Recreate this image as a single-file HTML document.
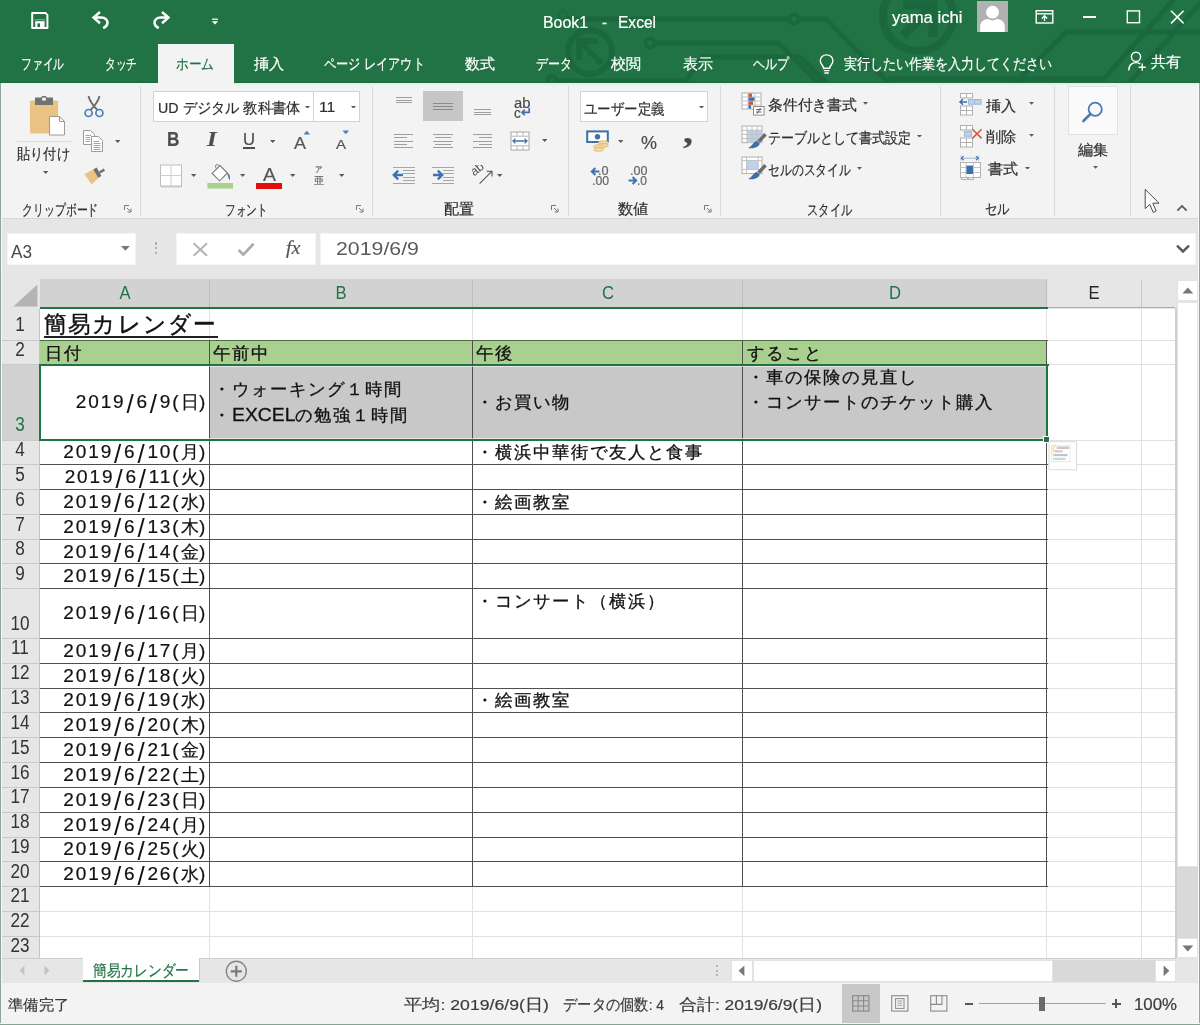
<!DOCTYPE html>
<html lang="ja"><head><meta charset="utf-8"><title>Book1 - Excel</title><style>
html,body{margin:0;padding:0}
body{width:1200px;height:1025px;position:relative;overflow:hidden;background:#e6e6e6;font-family:"Liberation Sans",sans-serif}
body div,body span,body svg{position:absolute;display:block}
.t{white-space:nowrap;transform-origin:0 50%;-webkit-text-stroke:.2px}
.c{white-space:nowrap;text-align:center}
.d{font-size:19px;line-height:19px;color:#111;letter-spacing:1.9px;-webkit-text-stroke:.2px #111}
.d i{font-style:normal;font-size:26px;line-height:0;position:relative;top:4.4px;padding:0 .9px;-webkit-text-stroke:0}
.d b{font-weight:normal;font-size:18px;letter-spacing:.3px}
.t i.e{font-style:normal;letter-spacing:0;font-size:19px}
</style></head><body>
<div style="left:0;top:0;width:1200px;height:1025px;will-change:transform">
<div style="left:0px;top:0px;width:1200px;height:83px;background:#217346;"></div>
<svg style="left:0px;top:0px;" width="1200" height="83" viewBox="0 0 1200 83"><g fill="none" stroke="#1c683e" stroke-width="5" stroke-linecap="butt" stroke-linejoin="round">
<circle cx="563" cy="15" r="4" stroke-width="3" opacity=".6"/>
<path d="M567 19H789"/><circle cx="794" cy="19" r="4.5" stroke-width="4"/><path d="M799 19H826L890 84"/>
<circle cx="590" cy="52" r="22" stroke-width="6"/>
<path d="M598 41H579V60M579 41L602 64" stroke-width="6" stroke-linejoin="miter"/>
<circle cx="650" cy="43" r="4.5" stroke-width="4"/><path d="M655 43H778L820 84"/>
<circle cx="552" cy="80" r="4" stroke-width="4"/><path d="M556 81H686L702 57H800L828 84"/>
<circle cx="918" cy="16" r="35" stroke-width="8"/>
<path d="M903 5H933V37M931 7L903 36" stroke-width="9" stroke-linejoin="miter"/>
<path d="M1200 32H1066L1014 84"/>
<path d="M1174 -1L1104 79H888"/>
<path d="M1203 0L1128 84"/>
</g></svg>
<svg style="left:30px;top:11px;" width="20" height="19" viewBox="0 0 20 19"><path d="M2.2 1.9H15.4L17.4 3.9V17.1H2.2Z" fill="none" stroke="#fff" stroke-width="2" stroke-linejoin="round"/>
<rect x="5.2" y="10.2" width="9.4" height="7" fill="#fff"/><rect x="7.4" y="12.4" width="2.6" height="3.6" fill="#217346"/><rect x="4.4" y="8" width="11" height="1.4" fill="#fff" opacity=".35"/></svg>
<svg style="left:91px;top:10px;" width="20" height="20" viewBox="0 0 20 20"><g fill="none" stroke="#fff" stroke-width="2.5" stroke-linecap="butt" stroke-linejoin="miter"><path d="M9 2L2.6 7.6L9 13.2"/><path d="M3 7.6H10.2C14.6 7.6 17 10.4 16.4 13.4C16 15.6 14.4 17.2 12.2 18.2"/></g></svg>
<svg style="left:151px;top:10px;" width="20" height="20" viewBox="0 0 20 20"><g fill="none" stroke="#fff" stroke-width="2.5" stroke-linecap="butt" stroke-linejoin="miter"><path d="M11 2L17.4 7.6L11 13.2"/><path d="M17 7.6H9.8C5.4 7.6 3 10.4 3.6 13.4C4 15.6 5.6 17.2 7.8 18.2"/></g></svg>
<svg style="left:211px;top:18px;" width="9" height="8" viewBox="0 0 9 8"><path d="M1 1.2H7" stroke="#fff" stroke-width="1.2"/><path d="M0.8 3.2H7.2L4 6.6Z" fill="#fff"/></svg>
<span class="t" style="left:543px;top:13.74px;font-size:16.5px;line-height:16.5px;color:#fff;transform:scaleX(0.962)">Book1</span>
<span class="t" style="left:601.5px;top:13.74px;font-size:16.5px;line-height:16.5px;color:#fff;transform:scaleX(0.909)">-</span>
<span class="t" style="left:618px;top:13.74px;font-size:16.5px;line-height:16.5px;color:#fff;transform:scaleX(0.942)">Excel</span>
<span class="t" style="left:892.3px;top:9.0px;font-size:17px;line-height:17px;color:#fff;transform:scaleX(0.982)">yama ichi</span>
<div style="left:977px;top:1px;width:31px;height:31px;background:#b1b1b1;"></div>
<svg style="left:977px;top:1px;" width="31" height="31" viewBox="0 0 31 31"><circle cx="15.5" cy="11.2" r="6.4" fill="#fff"/><path d="M3.2 31V26C3.2 20.5 7 18.3 11 18.1C13.8 20 17.2 20 20 18.1C24 18.3 27.8 20.5 27.8 26V31Z" fill="#fff"/></svg>
<svg style="left:1035px;top:9px;" width="20" height="16" viewBox="0 0 20 16"><g fill="none" stroke="#fff" stroke-width="1.4"><rect x="1.2" y="1.7" width="16.6" height="12.3"/><path d="M1.2 4.8H17.8"/><path d="M9.5 12V7M6.8 9.4L9.5 6.7L12.2 9.4"/></g></svg>
<div style="left:1083px;top:16.4px;width:13px;height:1.4px;background:#fff;"></div>
<svg style="left:1126px;top:9px;" width="16" height="16" viewBox="0 0 16 16"><rect x="1.3" y="1.9" width="12.2" height="11.8" fill="none" stroke="#fff" stroke-width="1.4"/></svg>
<svg style="left:1169px;top:9px;" width="17" height="17" viewBox="0 0 17 17"><path d="M2 1.8L14.6 14.4M14.6 1.8L2 14.4" stroke="#fff" stroke-width="1.5" fill="none"/></svg>
<div style="left:158px;top:44px;width:76px;height:40px;background:#f3f3f3;"></div>
<div style="left:0px;top:82px;width:158px;height:1px;background:#1d6b40;"></div>
<div style="left:234px;top:82px;width:966px;height:1px;background:#1d6b40;"></div>
<div style="left:232.4px;top:44.6px;width:1.6px;height:38.4px;background:#ecf8f1;"></div>
<div style="left:158px;top:44.6px;width:1.4px;height:38.4px;background:#ecf8f1;"></div>
<div style="left:158px;top:44px;width:76px;height:1.2px;background:#ecf8f1;"></div>
<span class="t" style="left:20.7px;top:56.45px;font-size:15px;line-height:15px;color:#fff;transform:scaleX(0.717)">ファイル</span>
<span class="t" style="left:105px;top:56.45px;font-size:15px;line-height:15px;color:#fff;transform:scaleX(0.711)">タッチ</span>
<span class="t" style="left:176px;top:56.45px;font-size:15px;line-height:15px;color:#217346;transform:scaleX(0.844)">ホーム</span>
<span class="t" style="left:253.7px;top:56.45px;font-size:15px;line-height:15px;color:#fff;transform:scaleX(1.010)">挿入</span>
<span class="t" style="left:324.3px;top:56.45px;font-size:15px;line-height:15px;color:#fff;transform:scaleX(0.811)">ページ レイアウト</span>
<span class="t" style="left:465px;top:56.45px;font-size:15px;line-height:15px;color:#fff;transform:scaleX(1.000)">数式</span>
<span class="t" style="left:535.7px;top:56.45px;font-size:15px;line-height:15px;color:#fff;transform:scaleX(0.800)">データ</span>
<span class="t" style="left:611px;top:56.45px;font-size:15px;line-height:15px;color:#fff;transform:scaleX(1.000)">校閲</span>
<span class="t" style="left:682.5px;top:56.45px;font-size:15px;line-height:15px;color:#fff;transform:scaleX(1.000)">表示</span>
<span class="t" style="left:753px;top:56.45px;font-size:15px;line-height:15px;color:#fff;transform:scaleX(0.800)">ヘルプ</span>
<span class="t" style="left:843.7px;top:56.45px;font-size:15px;line-height:15px;color:#fff;transform:scaleX(0.867)">実行したい作業を入力してください</span>
<span class="t" style="left:1151px;top:55.04px;font-size:14.6px;line-height:14.6px;color:#fff;transform:scaleX(1.000)">共有</span>
<svg style="left:817px;top:53px;" width="20" height="23" viewBox="0 0 20 23"><g fill="none" stroke="#fff" stroke-width="1.4"><path d="M6.6 15.2C6.6 12.6 3.3 11.6 3.3 7.8C3.3 4.4 6 1.9 9.6 1.9C13.2 1.9 15.9 4.4 15.9 7.8C15.9 11.6 12.6 12.6 12.6 15.2Z"/><path d="M6.8 17.6H12.4M7.4 20H11.8"/></g></svg>
<svg style="left:1127px;top:50px;" width="21" height="22" viewBox="0 0 21 22"><g fill="none" stroke="#fff" stroke-width="1.4"><circle cx="9" cy="6.8" r="4.6"/><path d="M1.8 20.5C1.8 15 5 12.6 9 12.6C10.6 12.6 12 13 13.2 13.8"/><path d="M15.2 13.6V20.8M11.6 17.2H18.8"/></g></svg>
<div style="left:0px;top:83px;width:1200px;height:135px;background:#f3f3f3;"></div>
<div style="left:0px;top:218px;width:1200px;height:1px;background:#d6d6d6;"></div>
<div style="left:140px;top:86px;width:1px;height:130px;background:#d8d8d8;"></div>
<div style="left:372px;top:86px;width:1px;height:130px;background:#d8d8d8;"></div>
<div style="left:568px;top:86px;width:1px;height:130px;background:#d8d8d8;"></div>
<div style="left:720px;top:86px;width:1px;height:130px;background:#d8d8d8;"></div>
<div style="left:940px;top:86px;width:1px;height:130px;background:#d8d8d8;"></div>
<div style="left:1054px;top:86px;width:1px;height:130px;background:#d8d8d8;"></div>
<div style="left:1130px;top:86px;width:1px;height:130px;background:#d8d8d8;"></div>
<svg style="left:28px;top:95px;" width="40" height="42" viewBox="0 0 40 42"><rect x="2" y="5.5" width="28" height="33" rx="1.5" fill="#eac282"/>
<path d="M7 2.5H13.2C13.2 0.6 18.8 0.6 18.8 2.5H25V10H7Z" fill="#737373"/><rect x="14.2" y="2.6" width="3.6" height="3" fill="#f3f3f3"/>
<path d="M21.5 21.5H31.5L36.5 26.5V40H21.5Z" fill="#fff" stroke="#9a9a9a" stroke-width="1"/><path d="M31.5 21.5V26.5H36.5" fill="none" stroke="#9a9a9a" stroke-width="1"/></svg>
<div style="left:17px;top:141px;width:54px;height:1px;background:#dcdcdc;"></div>
<span class="t" style="left:17px;top:146.35px;font-size:15px;line-height:15px;color:#2e2e2e;transform:scaleX(0.883)">貼り付け</span>
<svg style="left:43.3px;top:170.5px;" width="5.4" height="3" viewBox="0 0 5.4 3"><path d="M0 0H5.4L2.7 3Z" fill="#5a5a5a"/></svg>
<svg style="left:83px;top:94px;" width="22" height="25" viewBox="0 0 22 25"><g fill="none" stroke="#6a6a6a" stroke-width="1.8"><path d="M5.5 2C7 8 10 11.5 14 15.5M16.5 2C15 8 12 11.5 8 15.5"/></g>
<g fill="none" stroke="#4a7ebb" stroke-width="1.7"><circle cx="5.6" cy="19" r="3.5"/><circle cx="16.4" cy="19" r="3.5"/></g></svg>
<svg style="left:82px;top:129px;" width="23" height="24" viewBox="0 0 23 24"><g fill="#fdfdfd" stroke="#9c9c9c" stroke-width="1"><path d="M1.5 1.5H8.5L12.5 5.5V15.5H1.5Z"/><path d="M9.5 7.5H16.5L20.5 11.5V22.5H9.5Z"/></g>
<g stroke="#8fa9c4" stroke-width="1"><path d="M3.5 6.5H9M3.5 8.5H8M3.5 10.5H8M3.5 12.5H8"/><path d="M11.5 12.5H17M11.5 14.5H18.5M11.5 16.5H18.5M11.5 18.5H18.5M11.5 20.5H18.5"/></g></svg>
<svg style="left:114.9px;top:139.5px;" width="5.4" height="3" viewBox="0 0 5.4 3"><path d="M0 0H5.4L2.7 3Z" fill="#5a5a5a"/></svg>
<svg style="left:83px;top:166px;" width="23" height="20" viewBox="0 0 23 20"><path d="M1.5 8.2L10.8 3.2L15.6 11.8L8.6 18.6Z" fill="#eac282"/><path d="M10.4 3.4L13.6 1.6L18.4 10L15.2 11.8Z" fill="#6e6e6e"/><path d="M16 5.4L20.8 2.6L22 4.8L17.2 7.6Z" fill="#6e6e6e"/></svg>
<span class="t" style="left:22px;top:201.55px;font-size:15px;line-height:15px;color:#2e2e2e;transform:scaleX(0.727)">クリップボード</span>
<svg style="left:124px;top:205px;" width="8" height="8" viewBox="0 0 8 8"><path d="M0.5 5V0.5H5" fill="none" stroke="#777" stroke-width="1"/><path d="M3 3L6.6 6.6M7 3.6V7H3.6" fill="none" stroke="#777" stroke-width="1"/></svg>
<div style="left:153px;top:91px;width:161px;height:31px;background:#fff;box-sizing:border-box;border:1px solid #d2d2d2"></div>
<div style="left:313px;top:91px;width:47px;height:31px;background:#fff;box-sizing:border-box;border:1px solid #d2d2d2"></div>
<span class="t" style="left:157.6px;top:99.85px;font-size:15px;line-height:15px;color:#2e2e2e;transform:scaleX(0.949)">UD デジタル 教科書体</span>
<svg style="left:305.1px;top:105.6px;" width="5" height="2.8" viewBox="0 0 5 2.8"><path d="M0 0H5L2.5 2.8Z" fill="#5a5a5a"/></svg>
<span class="t" style="left:318.6px;top:99.21px;font-size:15.5px;line-height:15.5px;color:#2e2e2e;transform:scaleX(1.019)">11</span>
<svg style="left:350.9px;top:105.6px;" width="5" height="2.8" viewBox="0 0 5 2.8"><path d="M0 0H5L2.5 2.8Z" fill="#5a5a5a"/></svg>
<span class="t" style="left:166.6px;top:129.27px;font-size:20px;line-height:20px;color:#4d4d4d;font-weight:bold;transform:scaleX(0.858)">B</span>
<span class="t" style="left:207px;top:129.27px;font-size:20px;line-height:20px;color:#4d4d4d;font-weight:bold;font-style:italic;font-family:'Liberation Serif',serif;transform:scaleX(1.231)">I</span>
<span class="t" style="left:243px;top:130.9px;font-size:17px;line-height:17px;color:#4d4d4d;transform:scaleX(0.977)">U</span>
<div style="left:243px;top:147.4px;width:12px;height:1.3px;background:#4d4d4d;"></div>
<svg style="left:269.7px;top:139.5px;" width="5.4" height="3" viewBox="0 0 5.4 3"><path d="M0 0H5.4L2.7 3Z" fill="#5a5a5a"/></svg>
<span class="t" style="left:294px;top:134.9px;font-size:17px;line-height:17px;color:#555;transform:scaleX(1.058)">A</span>
<svg style="left:303px;top:130px;" width="8" height="5" viewBox="0 0 8 5"><path d="M0.5 4.5L3.8 0.8L7.1 4.5Z" fill="#4a7ebb"/></svg>
<span class="t" style="left:335.6px;top:137.77px;font-size:13.5px;line-height:13.5px;color:#555;transform:scaleX(1.109)">A</span>
<svg style="left:342px;top:130px;" width="8" height="5" viewBox="0 0 8 5"><path d="M0.5 0.6H7.1L3.8 4.3Z" fill="#4a7ebb"/></svg>
<svg style="left:159px;top:164px;" width="24" height="24" viewBox="0 0 24 24"><rect x="1.5" y="1" width="21" height="21" fill="#fff" stroke="#bdbdbd" stroke-width="1"/><path d="M12 1V22M1.5 11.5H22.5" stroke="#cfcfcf" stroke-width="1"/><path d="M2 22.8H23" stroke="#bdbdbd" stroke-width="1"/></svg>
<svg style="left:191.3px;top:173.5px;" width="5.4" height="3" viewBox="0 0 5.4 3"><path d="M0 0H5.4L2.7 3Z" fill="#5a5a5a"/></svg>
<svg style="left:207px;top:163px;" width="27" height="26" viewBox="0 0 27 26"><rect x="0.4" y="20" width="25.6" height="5.6" fill="#a9d08e"/>
<path d="M5.2 10.4L13 2.6L20.4 10L12.6 17.8Z" fill="#fff" stroke="#7a7a7a" stroke-width="1.1"/><path d="M12.4 3.2C10 -0.4 7.2 2 9.4 5.8" fill="none" stroke="#7a7a7a" stroke-width="1"/>
<path d="M20.6 9.8C23 11.6 23.6 14.6 22.6 17.2C21.4 15.6 21.4 13 20.2 10.8Z" fill="#3d6fa8"/></svg>
<svg style="left:240.3px;top:173.5px;" width="5.4" height="3" viewBox="0 0 5.4 3"><path d="M0 0H5.4L2.7 3Z" fill="#5a5a5a"/></svg>
<span class="t" style="left:263px;top:166.02px;font-size:18px;line-height:18px;color:#555;transform:scaleX(1.082)">A</span>
<div style="left:256.4px;top:183px;width:26px;height:5.6px;background:#e40d0d;"></div>
<svg style="left:289.7px;top:173.5px;" width="5.4" height="3" viewBox="0 0 5.4 3"><path d="M0 0H5.4L2.7 3Z" fill="#5a5a5a"/></svg>
<span class="t" style="left:315px;top:166.19px;font-size:8px;line-height:8px;color:#666;transform:scaleX(0.938)">ア</span>
<span class="t" style="left:313.6px;top:175.74px;font-size:10px;line-height:10px;color:#666;transform:scaleX(1.000)">亜</span>
<svg style="left:338.7px;top:173.5px;" width="5.4" height="3" viewBox="0 0 5.4 3"><path d="M0 0H5.4L2.7 3Z" fill="#5a5a5a"/></svg>
<span class="t" style="left:225px;top:201.85px;font-size:15px;line-height:15px;color:#2e2e2e;transform:scaleX(0.710)">フォント</span>
<svg style="left:355.5px;top:205px;" width="8" height="8" viewBox="0 0 8 8"><path d="M0.5 5V0.5H5" fill="none" stroke="#777" stroke-width="1"/><path d="M3 3L6.6 6.6M7 3.6V7H3.6" fill="none" stroke="#777" stroke-width="1"/></svg>
<div style="left:395.6px;top:97.0px;width:16.4px;height:1px;background:#9e9e9e;"></div>
<div style="left:395.6px;top:99.6px;width:16.4px;height:1px;background:#9e9e9e;"></div>
<div style="left:395.6px;top:102.2px;width:16.4px;height:1px;background:#9e9e9e;"></div>
<div style="left:423.4px;top:91.4px;width:39.2px;height:29.8px;background:#c6c6c6;"></div>
<div style="left:433px;top:103.0px;width:20px;height:1px;background:#8a8a8a;"></div>
<div style="left:433px;top:105.8px;width:20px;height:1px;background:#8a8a8a;"></div>
<div style="left:433px;top:108.6px;width:20px;height:1px;background:#8a8a8a;"></div>
<div style="left:474px;top:109.0px;width:16.6px;height:1px;background:#9e9e9e;"></div>
<div style="left:474px;top:111.6px;width:16.6px;height:1px;background:#9e9e9e;"></div>
<div style="left:474px;top:114.2px;width:16.6px;height:1px;background:#9e9e9e;"></div>
<span class="t" style="left:513.6px;top:96.33px;font-size:14px;line-height:14px;color:#4a4a4a;transform:scaleX(1.053)">ab</span>
<span class="t" style="left:513.6px;top:105.93px;font-size:14px;line-height:14px;color:#4a4a4a;transform:scaleX(0.971)">c</span>
<svg style="left:520px;top:107px;" width="11" height="10" viewBox="0 0 11 10"><path d="M9.2 1V5.4H2.4M4.8 2.6L2 5.4L4.8 8.2" fill="none" stroke="#3f73b0" stroke-width="1.7"/></svg>
<div style="left:394.4px;top:134.0px;width:18.6px;height:1.2px;background:#9e9e9e;"></div>
<div style="left:394.4px;top:137.3px;width:12.8px;height:1.2px;background:#9e9e9e;"></div>
<div style="left:394.4px;top:140.6px;width:18.6px;height:1.2px;background:#9e9e9e;"></div>
<div style="left:394.4px;top:143.9px;width:12.8px;height:1.2px;background:#9e9e9e;"></div>
<div style="left:394.4px;top:147.2px;width:18.6px;height:1.2px;background:#9e9e9e;"></div>
<div style="left:432.6px;top:134.0px;width:20.4px;height:1.2px;background:#9e9e9e;"></div>
<div style="left:434.8px;top:137.3px;width:16px;height:1.2px;background:#9e9e9e;"></div>
<div style="left:432.6px;top:140.6px;width:20.4px;height:1.2px;background:#9e9e9e;"></div>
<div style="left:434.8px;top:143.9px;width:16px;height:1.2px;background:#9e9e9e;"></div>
<div style="left:432.6px;top:147.2px;width:20.4px;height:1.2px;background:#9e9e9e;"></div>
<div style="left:473px;top:134.0px;width:19px;height:1.2px;background:#9e9e9e;"></div>
<div style="left:479px;top:137.3px;width:13px;height:1.2px;background:#9e9e9e;"></div>
<div style="left:473px;top:140.6px;width:19px;height:1.2px;background:#9e9e9e;"></div>
<div style="left:479px;top:143.9px;width:13px;height:1.2px;background:#9e9e9e;"></div>
<div style="left:473px;top:147.2px;width:19px;height:1.2px;background:#9e9e9e;"></div>
<svg style="left:510px;top:131px;" width="20" height="20" viewBox="0 0 20 20"><rect x="1" y="1" width="18" height="18" fill="#fff" stroke="#a8a8a8" stroke-width="1"/>
<path d="M1 5.2H19M1 14.8H19M7 1V5M13 1V5M7 15V19M13 15V19" stroke="#b5b5b5" stroke-width="1" fill="none"/>
<path d="M3 10H17M5.4 7.6L3 10L5.4 12.4M14.6 7.6L17 10L14.6 12.4" stroke="#3f73b0" stroke-width="1.3" fill="none"/></svg>
<svg style="left:541.9px;top:139.3px;" width="5.4" height="3" viewBox="0 0 5.4 3"><path d="M0 0H5.4L2.7 3Z" fill="#5a5a5a"/></svg>
<div style="left:392.6px;top:167.0px;width:22px;height:1.1px;background:#a6a6a6;"></div>
<div style="left:403px;top:170.2px;width:11.6px;height:1.1px;background:#a6a6a6;"></div>
<div style="left:403px;top:173.4px;width:11.6px;height:1.1px;background:#a6a6a6;"></div>
<div style="left:403px;top:176.6px;width:11.6px;height:1.1px;background:#a6a6a6;"></div>
<div style="left:403px;top:179.8px;width:11.6px;height:1.1px;background:#a6a6a6;"></div>
<div style="left:392.6px;top:183.0px;width:22px;height:1.1px;background:#a6a6a6;"></div>
<svg style="left:392px;top:169px;" width="12" height="12" viewBox="0 0 12 12"><path d="M11 6H2.2M6.2 1.6L1.8 6L6.2 10.4" fill="none" stroke="#3f73b0" stroke-width="2.4"/></svg>
<div style="left:432px;top:167.0px;width:22px;height:1.1px;background:#a6a6a6;"></div>
<div style="left:443px;top:170.2px;width:11px;height:1.1px;background:#a6a6a6;"></div>
<div style="left:443px;top:173.4px;width:11px;height:1.1px;background:#a6a6a6;"></div>
<div style="left:443px;top:176.6px;width:11px;height:1.1px;background:#a6a6a6;"></div>
<div style="left:443px;top:179.8px;width:11px;height:1.1px;background:#a6a6a6;"></div>
<div style="left:432px;top:183.0px;width:22px;height:1.1px;background:#a6a6a6;"></div>
<svg style="left:431.5px;top:169px;" width="12" height="12" viewBox="0 0 12 12"><path d="M1 6H9.8M5.8 1.6L10.2 6L5.8 10.4" fill="none" stroke="#3f73b0" stroke-width="2.4"/></svg>
<svg style="left:472px;top:165px;" width="22" height="21" viewBox="0 0 22 21"><text x="0" y="0" font-family="Liberation Sans,sans-serif" font-size="12.5" fill="#555" transform="translate(2.2 11.6) rotate(-40)">ab</text><path d="M7.6 18.6L19.6 6.6M14.6 6.2H20V11.6" fill="none" stroke="#555" stroke-width="1.1"/></svg>
<svg style="left:496.9px;top:173.5px;" width="5.4" height="3" viewBox="0 0 5.4 3"><path d="M0 0H5.4L2.7 3Z" fill="#5a5a5a"/></svg>
<span class="t" style="left:444px;top:201.35px;font-size:15px;line-height:15px;color:#2e2e2e;transform:scaleX(1.000)">配置</span>
<svg style="left:551px;top:205px;" width="8" height="8" viewBox="0 0 8 8"><path d="M0.5 5V0.5H5" fill="none" stroke="#777" stroke-width="1"/><path d="M3 3L6.6 6.6M7 3.6V7H3.6" fill="none" stroke="#777" stroke-width="1"/></svg>
<div style="left:580px;top:91px;width:128px;height:31px;background:#fff;box-sizing:border-box;border:1px solid #d2d2d2"></div>
<span class="t" style="left:583.6px;top:100.85px;font-size:15px;line-height:15px;color:#2e2e2e;transform:scaleX(0.898)">ユーザー定義</span>
<svg style="left:699.1px;top:105.6px;" width="5" height="2.8" viewBox="0 0 5 2.8"><path d="M0 0H5L2.5 2.8Z" fill="#5a5a5a"/></svg>
<svg style="left:586px;top:130px;" width="24" height="23" viewBox="0 0 24 23"><rect x="1.2" y="1.4" width="20.6" height="10.6" fill="#fff" stroke="#3d6fa8" stroke-width="2"/><circle cx="11.5" cy="6.7" r="2.7" fill="#3d6fa8"/>
<g fill="#f3d9a4" stroke="#e2b566" stroke-width=".8"><ellipse cx="17.4" cy="12.6" rx="5" ry="1.9"/><ellipse cx="17.4" cy="15.4" rx="5" ry="1.9"/><ellipse cx="12.6" cy="16.6" rx="5" ry="1.9"/><ellipse cx="12.6" cy="19.4" rx="5" ry="1.9"/></g></svg>
<svg style="left:618.3px;top:139.5px;" width="5.4" height="3" viewBox="0 0 5.4 3"><path d="M0 0H5.4L2.7 3Z" fill="#5a5a5a"/></svg>
<span class="t" style="left:640.6px;top:132.55px;font-size:19px;line-height:19px;color:#4a4a4a;transform:scaleX(0.946)">%</span>
<span class="t" style="left:683px;top:114.8px;font-size:34px;line-height:34px;color:#4a4a4a;font-weight:bold;font-family:'Liberation Serif',serif;transform:scaleX(1.176)">,</span>
<span class="t" style="left:598px;top:165.04px;font-size:12.5px;line-height:12.5px;color:#666;transform:scaleX(1.016)">.0</span>
<span class="t" style="left:591.6px;top:174.64px;font-size:12.5px;line-height:12.5px;color:#666;transform:scaleX(0.978)">.00</span>
<svg style="left:590px;top:166.5px;" width="10" height="9" viewBox="0 0 10 9"><path d="M9.4 4.5H2M5.4 1L1.8 4.5L5.4 8" fill="none" stroke="#3f73b0" stroke-width="2"/></svg>
<span class="t" style="left:630px;top:165.04px;font-size:12.5px;line-height:12.5px;color:#666;transform:scaleX(1.001)">.00</span>
<span class="t" style="left:637.4px;top:174.64px;font-size:12.5px;line-height:12.5px;color:#666;transform:scaleX(0.958)">.0</span>
<svg style="left:627.6px;top:176px;" width="10" height="9" viewBox="0 0 10 9"><path d="M0.6 4.5H8M4.6 1L8.2 4.5L4.6 8" fill="none" stroke="#3f73b0" stroke-width="2"/></svg>
<span class="t" style="left:618px;top:201.35px;font-size:15px;line-height:15px;color:#2e2e2e;transform:scaleX(1.020)">数値</span>
<svg style="left:704px;top:205px;" width="8" height="8" viewBox="0 0 8 8"><path d="M0.5 5V0.5H5" fill="none" stroke="#777" stroke-width="1"/><path d="M3 3L6.6 6.6M7 3.6V7H3.6" fill="none" stroke="#777" stroke-width="1"/></svg>
<svg style="left:741px;top:92px;" width="24" height="24" viewBox="0 0 24 24"><rect x="1" y="1" width="19" height="16" fill="#fff" stroke="#b0b0b0" stroke-width="1"/>
<path d="M1 5H20M1 9H20M1 13H20M7 1V17M14 1V17" stroke="#c4c4c4" stroke-width="1" fill="none"/>
<rect x="7.5" y="1.5" width="3.6" height="3.4" fill="#c9583c"/><rect x="7.5" y="5.4" width="6" height="3.4" fill="#3d6fa8"/><rect x="7.5" y="9.4" width="4.6" height="3.4" fill="#c9583c"/><rect x="7.5" y="13.2" width="2.6" height="3.4" fill="#3d6fa8"/>
<rect x="12.5" y="14.5" width="10.6" height="8.6" fill="#fff" stroke="#8c8c8c" stroke-width="1"/><path d="M15 17.6H20.6M15 20H20.6M19.6 15.8L16 21.8" stroke="#555" stroke-width=".9" fill="none"/></svg>
<span class="t" style="left:767.6px;top:97.35px;font-size:15px;line-height:15px;color:#2e2e2e;transform:scaleX(0.987)">条件付き書式</span>
<svg style="left:863.1px;top:102.4px;" width="5" height="2.8" viewBox="0 0 5 2.8"><path d="M0 0H5L2.5 2.8Z" fill="#5a5a5a"/></svg>
<svg style="left:741px;top:125px;" width="26" height="25" viewBox="0 0 26 25"><rect x="1" y="1" width="20" height="16.6" fill="#fff" stroke="#b0b0b0" stroke-width="1"/><rect x="6" y="5.2" width="15" height="12.4" fill="#bdd3ea"/>
<path d="M1 5.2H21M1 9.4H21M1 13.6H21M6 1V17.6M11 1V17.6M16 1V17.6" stroke="#c0c0c0" stroke-width="1" fill="none"/><g transform="translate(6.4 7.6)"><path d="M10 7.8L16.8 0.4L19.4 2.8L12.6 10.2Z" fill="#6b6b6b"/><path d="M9.4 8.2L12.4 10.8C11.6 14 6.4 16.4 0.8 15.4C4.4 14 5.6 9.8 9.4 8.2Z" fill="#3d6fa8"/></g></svg>
<span class="t" style="left:767.6px;top:129.85px;font-size:15px;line-height:15px;color:#2e2e2e;transform:scaleX(0.869)">テーブルとして書式設定</span>
<svg style="left:917.1px;top:134.6px;" width="5" height="2.8" viewBox="0 0 5 2.8"><path d="M0 0H5L2.5 2.8Z" fill="#5a5a5a"/></svg>
<svg style="left:741px;top:156px;" width="26" height="25" viewBox="0 0 26 25"><rect x="1" y="1" width="20" height="16.6" fill="#fff" stroke="#b0b0b0" stroke-width="1"/><rect x="5.6" y="4.6" width="11.6" height="8.8" fill="#bdd3ea"/>
<path d="M1 4.6H21M1 13.4H21M5.6 1V17.6M17.2 1V17.6" stroke="#c0c0c0" stroke-width="1" fill="none"/><g transform="translate(6.4 7.6)"><path d="M10 7.8L16.8 0.4L19.4 2.8L12.6 10.2Z" fill="#6b6b6b"/><path d="M9.4 8.2L12.4 10.8C11.6 14 6.4 16.4 0.8 15.4C4.4 14 5.6 9.8 9.4 8.2Z" fill="#3d6fa8"/></g></svg>
<span class="t" style="left:767.6px;top:161.85px;font-size:15px;line-height:15px;color:#2e2e2e;transform:scaleX(0.790)">セルのスタイル</span>
<svg style="left:857.1px;top:167.0px;" width="5" height="2.8" viewBox="0 0 5 2.8"><path d="M0 0H5L2.5 2.8Z" fill="#5a5a5a"/></svg>
<span class="t" style="left:807px;top:202.15px;font-size:15px;line-height:15px;color:#2e2e2e;transform:scaleX(0.750)">スタイル</span>
<svg style="left:958px;top:92px;" width="25" height="25" viewBox="0 0 25 25"><g fill="#fff" stroke="#b0b0b0" stroke-width="1"><rect x="2.5" y="1.5" width="12" height="4.4"/><rect x="2.5" y="14" width="12" height="9"/></g><path d="M8.5 1.5V5.9M8.5 14V23M2.5 18.5H14.5" stroke="#b0b0b0" stroke-width="1"/>
<rect x="10.5" y="7.6" width="12.6" height="4.6" fill="#bdd3ea" stroke="#9db6d2" stroke-width="1"/><path d="M16.8 7.6V12.2" stroke="#9db6d2"/>
<path d="M9 9.9H2.2M5 7L2 9.9L5 12.8" fill="none" stroke="#3d6fa8" stroke-width="1.5"/></svg>
<span class="t" style="left:986px;top:97.85px;font-size:15px;line-height:15px;color:#2e2e2e;transform:scaleX(1.010)">挿入</span>
<svg style="left:1029.1px;top:102.4px;" width="5" height="2.8" viewBox="0 0 5 2.8"><path d="M0 0H5L2.5 2.8Z" fill="#5a5a5a"/></svg>
<svg style="left:958px;top:124px;" width="25" height="25" viewBox="0 0 25 25"><g fill="#fff" stroke="#b0b0b0" stroke-width="1"><rect x="2.5" y="1.5" width="12" height="4.4"/><rect x="2.5" y="14" width="12" height="9"/></g><path d="M8.5 1.5V5.9M8.5 14V23M2.5 18.5H14.5" stroke="#b0b0b0" stroke-width="1"/>
<rect x="6.5" y="7.6" width="7" height="4.6" fill="#bdd3ea" stroke="#9db6d2" stroke-width="1"/>
<path d="M14.4 5.2L23.6 14.4M23.6 5.2L14.4 14.4" fill="none" stroke="#d2553a" stroke-width="1.5"/></svg>
<span class="t" style="left:986px;top:129.35px;font-size:15px;line-height:15px;color:#2e2e2e;transform:scaleX(1.010)">削除</span>
<svg style="left:1029.1px;top:134.2px;" width="5" height="2.8" viewBox="0 0 5 2.8"><path d="M0 0H5L2.5 2.8Z" fill="#5a5a5a"/></svg>
<svg style="left:959px;top:155px;" width="24" height="26" viewBox="0 0 24 26"><path d="M2 3.2H19.6M2 0.6V5.8M19.6 0.6V5.8" stroke="#9db6d2" stroke-width="1" fill="none"/><path d="M4.6 1.2L2.6 3.2L4.6 5.2M17 1.2L19 3.2L17 5.2" stroke="#3d6fa8" stroke-width="1.2" fill="none"/>
<rect x="1.5" y="7.5" width="20" height="15" fill="#fff" stroke="#b0b0b0" stroke-width="1"/><path d="M1.5 12.5H21.5M1.5 17.5H21.5M7 7.5V22.5M14.4 7.5V22.5" stroke="#c4c4c4" stroke-width="1" fill="none"/>
<rect x="7.4" y="10.6" width="6.6" height="8.4" fill="#3d6fa8"/><path d="M2.5 22.5V24.6H8.5V22.5M9.5 22.5V24.6H14.5V22.5" stroke="#b0b0b0" fill="none"/></svg>
<span class="t" style="left:988px;top:161.35px;font-size:15px;line-height:15px;color:#2e2e2e;transform:scaleX(1.000)">書式</span>
<svg style="left:1024.5px;top:166.6px;" width="5" height="2.8" viewBox="0 0 5 2.8"><path d="M0 0H5L2.5 2.8Z" fill="#5a5a5a"/></svg>
<span class="t" style="left:985px;top:201.15px;font-size:15px;line-height:15px;color:#2e2e2e;transform:scaleX(0.827)">セル</span>
<div style="left:1068px;top:86px;width:50px;height:49px;background:#fafafa;box-sizing:border-box;border:1px solid #e1e1e1"></div>
<svg style="left:1081px;top:100px;" width="24" height="24" viewBox="0 0 24 24"><circle cx="14.2" cy="9.2" r="6.6" fill="none" stroke="#4a7ab0" stroke-width="1.8"/><path d="M9.4 14L2.4 21" stroke="#4a7ab0" stroke-width="2.6" stroke-linecap="round"/></svg>
<span class="t" style="left:1077.6px;top:141.65px;font-size:15px;line-height:15px;color:#2e2e2e;transform:scaleX(1.013)">編集</span>
<svg style="left:1092.5px;top:165.8px;" width="5" height="2.8" viewBox="0 0 5 2.8"><path d="M0 0H5L2.5 2.8Z" fill="#5a5a5a"/></svg>
<svg style="left:1144px;top:188px;" width="18" height="27" viewBox="0 0 18 27"><path d="M1.2 1.4V20.6L5.8 16.4L9.2 24.4L12.2 23L8.8 15.2H15Z" fill="#fff" stroke="#4a4a4a" stroke-width="1" stroke-linejoin="miter"/></svg>
<svg style="left:1176px;top:204px;" width="12" height="8" viewBox="0 0 12 8"><path d="M1.4 6.6L6 2L10.6 6.6" fill="none" stroke="#555" stroke-width="1.7"/></svg>
<div style="left:0px;top:219px;width:1200px;height:60px;background:#e6e6e6;"></div>
<div style="left:7px;top:233px;width:129px;height:32px;background:#fff;box-sizing:border-box;border:1px solid #f4f4f4"></div>
<span class="t" style="left:11px;top:241.95px;font-size:19px;line-height:19px;color:#4a4a4a;-webkit-text-stroke:0;transform:scaleX(0.903)">A3</span>
<svg style="left:121.4px;top:245.6px;" width="9" height="5" viewBox="0 0 9 5"><path d="M0 0H8.8L4.4 4.8Z" fill="#777"/></svg>
<div style="left:154.6px;top:242.2px;width:2.4px;height:2.4px;background:#b0b0b0;"></div>
<div style="left:154.6px;top:247.1px;width:2.4px;height:2.4px;background:#b0b0b0;"></div>
<div style="left:154.6px;top:252.0px;width:2.4px;height:2.4px;background:#b0b0b0;"></div>
<div style="left:176px;top:233px;width:140px;height:32px;background:#fff;box-sizing:border-box;border:1px solid #f4f4f4"></div>
<svg style="left:191.5px;top:241.5px;" width="17" height="15" viewBox="0 0 17 15"><path d="M1.6 1.2L15 13.8M15 1.2L1.6 13.8" stroke="#b4b4b4" stroke-width="2" fill="none"/></svg>
<svg style="left:237px;top:241.5px;" width="19" height="15" viewBox="0 0 19 15"><path d="M1.6 8L6.4 12.6L16.6 1.8" stroke="#adadad" stroke-width="2.7" fill="none"/></svg>
<span class="t" style="left:286px;top:238.31px;font-size:19.5px;line-height:19.5px;color:#555;font-style:italic;font-family:'Liberation Serif',serif;transform:scaleX(1.030)">fx</span>
<div style="left:320px;top:233px;width:876px;height:32px;background:#fff;box-sizing:border-box;border:1px solid #f4f4f4"></div>
<span class="t" style="left:336px;top:239.92px;font-size:18px;line-height:18px;color:#5a5a5a;-webkit-text-stroke:0;transform:scaleX(1.184)">2019/6/9</span>
<svg style="left:1175px;top:243px;" width="16" height="11" viewBox="0 0 16 11"><path d="M2 2.6L8 8.4L14 2.6" fill="none" stroke="#5a5a5a" stroke-width="2.5"/></svg>
<div style="left:40px;top:309px;width:1135px;height:649px;background:#fff;"></div>
<div style="left:1px;top:279px;width:1175px;height:29px;background:#e6e6e6;"></div>
<div style="left:40px;top:279px;width:1007px;height:29px;background:#d2d2d2;"></div>
<svg style="left:12px;top:283px;" width="27" height="25" viewBox="0 0 27 25"><path d="M25.4 1.6V23.6H1.4Z" fill="#b4b4b4"/></svg>
<div style="left:209px;top:280px;width:1px;height:28px;background:#bdbdbd;"></div>
<div style="left:472px;top:280px;width:1px;height:28px;background:#bdbdbd;"></div>
<div style="left:742px;top:280px;width:1px;height:28px;background:#bdbdbd;"></div>
<div style="left:1046px;top:280px;width:1px;height:28px;background:#bdbdbd;"></div>
<div style="left:1141px;top:280px;width:1px;height:28px;background:#c9c9c9;"></div>
<div style="left:1047px;top:307px;width:128px;height:1px;background:#ababab;"></div>
<div style="left:40px;top:307.2px;width:1008px;height:1.6px;background:#217346;"></div>
<span class="c" style="left:94.5px;top:284.18px;width:60px;font-size:18.5px;line-height:18.5px;color:#217346;transform:scaleX(0.9)">A</span>
<span class="c" style="left:311.0px;top:284.18px;width:60px;font-size:18.5px;line-height:18.5px;color:#217346;transform:scaleX(0.9)">B</span>
<span class="c" style="left:577.5px;top:284.18px;width:60px;font-size:18.5px;line-height:18.5px;color:#217346;transform:scaleX(0.9)">C</span>
<span class="c" style="left:865.0px;top:284.18px;width:60px;font-size:18.5px;line-height:18.5px;color:#217346;transform:scaleX(0.9)">D</span>
<span class="c" style="left:1064.0px;top:284.18px;width:60px;font-size:18.5px;line-height:18.5px;color:#262626;transform:scaleX(0.9)">E</span>
<div style="left:1px;top:309px;width:38px;height:649px;background:#e6e6e6;"></div>
<div style="left:1px;top:365px;width:38px;height:75px;background:#d2d2d2;"></div>
<div style="left:39px;top:309px;width:1px;height:649px;background:#c4c4c4;"></div>
<div style="left:1px;top:340px;width:38px;height:1px;background:#c9c9c9;"></div>
<div style="left:1px;top:364px;width:38px;height:1px;background:#c9c9c9;"></div>
<div style="left:1px;top:440px;width:38px;height:1px;background:#c9c9c9;"></div>
<div style="left:1px;top:464px;width:38px;height:1px;background:#c9c9c9;"></div>
<div style="left:1px;top:489px;width:38px;height:1px;background:#c9c9c9;"></div>
<div style="left:1px;top:514px;width:38px;height:1px;background:#c9c9c9;"></div>
<div style="left:1px;top:539px;width:38px;height:1px;background:#c9c9c9;"></div>
<div style="left:1px;top:563px;width:38px;height:1px;background:#c9c9c9;"></div>
<div style="left:1px;top:588px;width:38px;height:1px;background:#c9c9c9;"></div>
<div style="left:1px;top:638px;width:38px;height:1px;background:#c9c9c9;"></div>
<div style="left:1px;top:663px;width:38px;height:1px;background:#c9c9c9;"></div>
<div style="left:1px;top:688px;width:38px;height:1px;background:#c9c9c9;"></div>
<div style="left:1px;top:712px;width:38px;height:1px;background:#c9c9c9;"></div>
<div style="left:1px;top:737px;width:38px;height:1px;background:#c9c9c9;"></div>
<div style="left:1px;top:762px;width:38px;height:1px;background:#c9c9c9;"></div>
<div style="left:1px;top:787px;width:38px;height:1px;background:#c9c9c9;"></div>
<div style="left:1px;top:812px;width:38px;height:1px;background:#c9c9c9;"></div>
<div style="left:1px;top:837px;width:38px;height:1px;background:#c9c9c9;"></div>
<div style="left:1px;top:861px;width:38px;height:1px;background:#c9c9c9;"></div>
<div style="left:1px;top:886px;width:38px;height:1px;background:#c9c9c9;"></div>
<div style="left:1px;top:911px;width:38px;height:1px;background:#c9c9c9;"></div>
<div style="left:1px;top:936px;width:38px;height:1px;background:#c9c9c9;"></div>
<span class="c" style="left:-0.3999999999999986px;top:315.21px;width:40px;font-size:19.5px;line-height:19.5px;color:#333;transform:scaleX(0.88)">1</span>
<span class="c" style="left:-0.3999999999999986px;top:339.71px;width:40px;font-size:19.5px;line-height:19.5px;color:#333;transform:scaleX(0.88)">2</span>
<span class="c" style="left:-0.3999999999999986px;top:415.21px;width:40px;font-size:19.5px;line-height:19.5px;color:#217346;transform:scaleX(0.88)">3</span>
<span class="c" style="left:-0.3999999999999986px;top:439.91px;width:40px;font-size:19.5px;line-height:19.5px;color:#333;transform:scaleX(0.88)">4</span>
<span class="c" style="left:-0.3999999999999986px;top:464.81px;width:40px;font-size:19.5px;line-height:19.5px;color:#333;transform:scaleX(0.88)">5</span>
<span class="c" style="left:-0.3999999999999986px;top:489.71px;width:40px;font-size:19.5px;line-height:19.5px;color:#333;transform:scaleX(0.88)">6</span>
<span class="c" style="left:-0.3999999999999986px;top:514.61px;width:40px;font-size:19.5px;line-height:19.5px;color:#333;transform:scaleX(0.88)">7</span>
<span class="c" style="left:-0.3999999999999986px;top:539.01px;width:40px;font-size:19.5px;line-height:19.5px;color:#333;transform:scaleX(0.88)">8</span>
<span class="c" style="left:-0.3999999999999986px;top:563.71px;width:40px;font-size:19.5px;line-height:19.5px;color:#333;transform:scaleX(0.88)">9</span>
<span class="c" style="left:-0.3999999999999986px;top:613.51px;width:40px;font-size:19.5px;line-height:19.5px;color:#333;transform:scaleX(0.88)">10</span>
<span class="c" style="left:-0.3999999999999986px;top:638.21px;width:40px;font-size:19.5px;line-height:19.5px;color:#333;transform:scaleX(0.88)">11</span>
<span class="c" style="left:-0.3999999999999986px;top:663.21px;width:40px;font-size:19.5px;line-height:19.5px;color:#333;transform:scaleX(0.88)">12</span>
<span class="c" style="left:-0.3999999999999986px;top:688.01px;width:40px;font-size:19.5px;line-height:19.5px;color:#333;transform:scaleX(0.88)">13</span>
<span class="c" style="left:-0.3999999999999986px;top:713.01px;width:40px;font-size:19.5px;line-height:19.5px;color:#333;transform:scaleX(0.88)">14</span>
<span class="c" style="left:-0.3999999999999986px;top:737.71px;width:40px;font-size:19.5px;line-height:19.5px;color:#333;transform:scaleX(0.88)">15</span>
<span class="c" style="left:-0.3999999999999986px;top:762.61px;width:40px;font-size:19.5px;line-height:19.5px;color:#333;transform:scaleX(0.88)">16</span>
<span class="c" style="left:-0.3999999999999986px;top:787.41px;width:40px;font-size:19.5px;line-height:19.5px;color:#333;transform:scaleX(0.88)">17</span>
<span class="c" style="left:-0.3999999999999986px;top:812.21px;width:40px;font-size:19.5px;line-height:19.5px;color:#333;transform:scaleX(0.88)">18</span>
<span class="c" style="left:-0.3999999999999986px;top:837.01px;width:40px;font-size:19.5px;line-height:19.5px;color:#333;transform:scaleX(0.88)">19</span>
<span class="c" style="left:-0.3999999999999986px;top:861.61px;width:40px;font-size:19.5px;line-height:19.5px;color:#333;transform:scaleX(0.88)">20</span>
<span class="c" style="left:-0.3999999999999986px;top:886.41px;width:40px;font-size:19.5px;line-height:19.5px;color:#333;transform:scaleX(0.88)">21</span>
<span class="c" style="left:-0.3999999999999986px;top:911.31px;width:40px;font-size:19.5px;line-height:19.5px;color:#333;transform:scaleX(0.88)">22</span>
<span class="c" style="left:-0.3999999999999986px;top:936.21px;width:40px;font-size:19.5px;line-height:19.5px;color:#333;transform:scaleX(0.88)">23</span>
<div style="left:209px;top:309px;width:1px;height:649px;background:#e0e0e0;"></div>
<div style="left:472px;top:309px;width:1px;height:649px;background:#e0e0e0;"></div>
<div style="left:742px;top:309px;width:1px;height:649px;background:#e0e0e0;"></div>
<div style="left:1046px;top:309px;width:1px;height:649px;background:#e0e0e0;"></div>
<div style="left:1141px;top:309px;width:1px;height:649px;background:#e0e0e0;"></div>
<div style="left:40px;top:340px;width:1135px;height:1px;background:#e0e0e0;"></div>
<div style="left:40px;top:364px;width:1135px;height:1px;background:#e0e0e0;"></div>
<div style="left:40px;top:440px;width:1135px;height:1px;background:#e0e0e0;"></div>
<div style="left:40px;top:464px;width:1135px;height:1px;background:#e0e0e0;"></div>
<div style="left:40px;top:489px;width:1135px;height:1px;background:#e0e0e0;"></div>
<div style="left:40px;top:514px;width:1135px;height:1px;background:#e0e0e0;"></div>
<div style="left:40px;top:539px;width:1135px;height:1px;background:#e0e0e0;"></div>
<div style="left:40px;top:563px;width:1135px;height:1px;background:#e0e0e0;"></div>
<div style="left:40px;top:588px;width:1135px;height:1px;background:#e0e0e0;"></div>
<div style="left:40px;top:638px;width:1135px;height:1px;background:#e0e0e0;"></div>
<div style="left:40px;top:663px;width:1135px;height:1px;background:#e0e0e0;"></div>
<div style="left:40px;top:688px;width:1135px;height:1px;background:#e0e0e0;"></div>
<div style="left:40px;top:712px;width:1135px;height:1px;background:#e0e0e0;"></div>
<div style="left:40px;top:737px;width:1135px;height:1px;background:#e0e0e0;"></div>
<div style="left:40px;top:762px;width:1135px;height:1px;background:#e0e0e0;"></div>
<div style="left:40px;top:787px;width:1135px;height:1px;background:#e0e0e0;"></div>
<div style="left:40px;top:812px;width:1135px;height:1px;background:#e0e0e0;"></div>
<div style="left:40px;top:837px;width:1135px;height:1px;background:#e0e0e0;"></div>
<div style="left:40px;top:861px;width:1135px;height:1px;background:#e0e0e0;"></div>
<div style="left:40px;top:886px;width:1135px;height:1px;background:#e0e0e0;"></div>
<div style="left:40px;top:911px;width:1135px;height:1px;background:#e0e0e0;"></div>
<div style="left:40px;top:936px;width:1135px;height:1px;background:#e0e0e0;"></div>
<div style="left:40px;top:341px;width:1007px;height:24px;background:#a9d08e;"></div>
<div style="left:210px;top:366px;width:837px;height:74px;background:#c8c8c8;"></div>
<div style="left:40px;top:340px;width:1008px;height:1px;background:#4f4f4f;"></div>
<div style="left:40px;top:364px;width:1008px;height:1px;background:#4f4f4f;"></div>
<div style="left:40px;top:440px;width:1008px;height:1px;background:#4f4f4f;"></div>
<div style="left:40px;top:464px;width:1008px;height:1px;background:#4f4f4f;"></div>
<div style="left:40px;top:489px;width:1008px;height:1px;background:#4f4f4f;"></div>
<div style="left:40px;top:514px;width:1008px;height:1px;background:#4f4f4f;"></div>
<div style="left:40px;top:539px;width:1008px;height:1px;background:#4f4f4f;"></div>
<div style="left:40px;top:563px;width:1008px;height:1px;background:#4f4f4f;"></div>
<div style="left:40px;top:588px;width:1008px;height:1px;background:#4f4f4f;"></div>
<div style="left:40px;top:638px;width:1008px;height:1px;background:#4f4f4f;"></div>
<div style="left:40px;top:663px;width:1008px;height:1px;background:#4f4f4f;"></div>
<div style="left:40px;top:688px;width:1008px;height:1px;background:#4f4f4f;"></div>
<div style="left:40px;top:712px;width:1008px;height:1px;background:#4f4f4f;"></div>
<div style="left:40px;top:737px;width:1008px;height:1px;background:#4f4f4f;"></div>
<div style="left:40px;top:762px;width:1008px;height:1px;background:#4f4f4f;"></div>
<div style="left:40px;top:787px;width:1008px;height:1px;background:#4f4f4f;"></div>
<div style="left:40px;top:812px;width:1008px;height:1px;background:#4f4f4f;"></div>
<div style="left:40px;top:837px;width:1008px;height:1px;background:#4f4f4f;"></div>
<div style="left:40px;top:861px;width:1008px;height:1px;background:#4f4f4f;"></div>
<div style="left:40px;top:886px;width:1008px;height:1px;background:#4f4f4f;"></div>
<div style="left:209px;top:341px;width:1px;height:545px;background:#4f4f4f;"></div>
<div style="left:472px;top:341px;width:1px;height:545px;background:#4f4f4f;"></div>
<div style="left:742px;top:341px;width:1px;height:545px;background:#4f4f4f;"></div>
<div style="left:1046px;top:341px;width:1px;height:545px;background:#4f4f4f;"></div>
<div style="left:40px;top:340px;width:1008px;height:1px;background:#4c6b45;"></div>
<div style="left:39px;top:364px;width:1010px;height:2px;background:#217346;"></div>
<div style="left:39px;top:439px;width:1010px;height:2px;background:#217346;"></div>
<div style="left:39px;top:364px;width:2px;height:77px;background:#217346;"></div>
<div style="left:1045.7px;top:364px;width:2px;height:77px;background:#217346;"></div>
<div style="left:41px;top:366px;width:1005px;height:1px;background:#fff;opacity:.55"></div>
<div style="left:41px;top:438px;width:1005px;height:1px;background:#fff;opacity:.55"></div>
<div style="left:1043px;top:436px;width:7px;height:7px;background:#fff;"></div>
<div style="left:1044px;top:437px;width:5px;height:5px;background:#217346;"></div>
<span class="t" style="left:44px;top:313.04px;font-size:23px;line-height:23px;color:#111;letter-spacing:1.7px;-webkit-text-stroke:0.45px #111;transform:scaleX(0.981)">簡易カレンダー</span>
<div style="left:44px;top:336.4px;width:173.6px;height:1.5px;background:#222;"></div>
<span class="t" style="left:44.5px;top:345.21px;font-size:17.4px;line-height:17.4px;color:#111;letter-spacing:1.65px;-webkit-text-stroke:0.3px #111;transform:scaleX(1.021)">日付</span>
<span class="t" style="left:213px;top:345.21px;font-size:17.4px;line-height:17.4px;color:#111;letter-spacing:1.65px;-webkit-text-stroke:0.3px #111;transform:scaleX(1.021)">午前中</span>
<span class="t" style="left:476px;top:345.21px;font-size:17.4px;line-height:17.4px;color:#111;letter-spacing:1.65px;-webkit-text-stroke:0.3px #111;transform:scaleX(1.021)">午後</span>
<span class="t" style="left:746.5px;top:345.21px;font-size:17.4px;line-height:17.4px;color:#111;letter-spacing:1.65px;-webkit-text-stroke:0.3px #111;transform:scaleX(1.021)">すること</span>
<span class="t" style="left:213px;top:381.41px;font-size:17.4px;line-height:17.4px;color:#111;letter-spacing:1.65px;-webkit-text-stroke:0.3px #111;transform:scaleX(1.021)">・ウォーキング１時間</span>
<span class="t" style="left:213px;top:405.71px;font-size:17.4px;line-height:17.4px;color:#111;letter-spacing:1.65px;-webkit-text-stroke:0.3px #111;transform:scaleX(1.018)">・<i class="e">EXCEL</i>の勉強１時間</span>
<span class="t" style="left:476px;top:394.11px;font-size:17.4px;line-height:17.4px;color:#111;letter-spacing:1.65px;-webkit-text-stroke:0.3px #111;transform:scaleX(1.021)">・お買い物</span>
<span class="t" style="left:746.5px;top:369.31px;font-size:17.4px;line-height:17.4px;color:#111;letter-spacing:1.65px;-webkit-text-stroke:0.3px #111;transform:scaleX(1.021)">・車の保険の見直し</span>
<span class="t" style="left:746.5px;top:394.11px;font-size:17.4px;line-height:17.4px;color:#111;letter-spacing:1.65px;-webkit-text-stroke:0.3px #111;transform:scaleX(1.021)">・コンサートのチケット購入</span>
<span class="t" style="left:476px;top:443.91px;font-size:17.4px;line-height:17.4px;color:#111;letter-spacing:1.65px;-webkit-text-stroke:0.3px #111;transform:scaleX(1.021)">・横浜中華街で友人と食事</span>
<span class="t" style="left:476px;top:493.71px;font-size:17.4px;line-height:17.4px;color:#111;letter-spacing:1.65px;-webkit-text-stroke:0.3px #111;transform:scaleX(1.021)">・絵画教室</span>
<span class="t" style="left:476px;top:592.91px;font-size:17.4px;line-height:17.4px;color:#111;letter-spacing:1.65px;-webkit-text-stroke:0.3px #111;transform:scaleX(1.021)">・コンサート（横浜）</span>
<span class="t" style="left:476px;top:692.31px;font-size:17.4px;line-height:17.4px;color:#111;letter-spacing:1.65px;-webkit-text-stroke:0.3px #111;transform:scaleX(1.021)">・絵画教室</span>
<span class="t d" style="right:992.9px;top:392.3px">2019<i>/</i>6<i>/</i>9(<b>日</b>)</span>
<span class="t d" style="right:992.9px;top:442.4px">2019<i>/</i>6<i>/</i>10(<b>月</b>)</span>
<span class="t d" style="right:992.9px;top:467.2px">2019<i>/</i>6<i>/</i>11(<b>火</b>)</span>
<span class="t d" style="right:992.9px;top:492.1px">2019<i>/</i>6<i>/</i>12(<b>水</b>)</span>
<span class="t d" style="right:992.9px;top:517.0px">2019<i>/</i>6<i>/</i>13(<b>木</b>)</span>
<span class="t d" style="right:992.9px;top:541.65px">2019<i>/</i>6<i>/</i>14(<b>金</b>)</span>
<span class="t d" style="right:992.9px;top:566.2px">2019<i>/</i>6<i>/</i>15(<b>土</b>)</span>
<span class="t d" style="right:992.9px;top:603.45px">2019<i>/</i>6<i>/</i>16(<b>日</b>)</span>
<span class="t d" style="right:992.9px;top:640.7px">2019<i>/</i>6<i>/</i>17(<b>月</b>)</span>
<span class="t d" style="right:992.9px;top:665.55px">2019<i>/</i>6<i>/</i>18(<b>火</b>)</span>
<span class="t d" style="right:992.9px;top:690.45px">2019<i>/</i>6<i>/</i>19(<b>水</b>)</span>
<span class="t d" style="right:992.9px;top:715.35px">2019<i>/</i>6<i>/</i>20(<b>木</b>)</span>
<span class="t d" style="right:992.9px;top:740.2px">2019<i>/</i>6<i>/</i>21(<b>金</b>)</span>
<span class="t d" style="right:992.9px;top:765.0px">2019<i>/</i>6<i>/</i>22(<b>土</b>)</span>
<span class="t d" style="right:992.9px;top:789.85px">2019<i>/</i>6<i>/</i>23(<b>日</b>)</span>
<span class="t d" style="right:992.9px;top:814.65px">2019<i>/</i>6<i>/</i>24(<b>月</b>)</span>
<span class="t d" style="right:992.9px;top:839.45px">2019<i>/</i>6<i>/</i>25(<b>火</b>)</span>
<span class="t d" style="right:992.9px;top:864.15px">2019<i>/</i>6<i>/</i>26(<b>水</b>)</span>
<svg style="left:1048px;top:441px;" width="30" height="30" viewBox="0 0 30 30"><rect x="1" y="0.8" width="27.6" height="28" fill="#fff" stroke="#d9dcdc" stroke-width="1"/>
<rect x="3.6" y="4.8" width="18.4" height="15.8" fill="#fff" stroke="#ece6e0" stroke-width="1"/>
<path d="M5.2 3.4H8.6L6 8.4H8L4 14.2L5 9.6H3.4Z" fill="#f6e6c4"/>
<rect x="8.6" y="5.6" width="12.6" height="2.4" fill="#c9c9c9"/><rect x="6.6" y="9.4" width="8" height="2" fill="#e9b8ae"/><rect x="5.2" y="13" width="14.4" height="2.2" fill="#b4c6dc"/><rect x="5.2" y="16.8" width="12.4" height="2.2" fill="#c5dccb"/></svg>
<div style="left:1175px;top:279px;width:2px;height:679px;background:#cfcfcf;"></div>
<div style="left:1175px;top:279px;width:2px;height:29px;background:#e6e6e6;"></div>
<div style="left:1177px;top:279px;width:21px;height:679px;background:#e6e6e6;"></div>
<div style="left:1177px;top:280px;width:21px;height:21px;background:#fff;box-sizing:border-box;border:1px solid #e3e3e3"></div>
<svg style="left:1182px;top:287px;" width="12" height="7" viewBox="0 0 12 7"><path d="M0.4 6.4L5.8 0.6L11.2 6.4Z" fill="#777"/></svg>
<div style="left:1177px;top:302px;width:21px;height:565px;background:#fff;box-sizing:border-box;border:1px solid #e3e3e3"></div>
<div style="left:1177px;top:867px;width:21px;height:71px;background:#d9d9d9;"></div>
<div style="left:1177px;top:938px;width:21px;height:20px;background:#fff;box-sizing:border-box;border:1px solid #e3e3e3"></div>
<svg style="left:1182px;top:945px;" width="12" height="7" viewBox="0 0 12 7"><path d="M0.4 0.6H11.2L5.8 6.4Z" fill="#777"/></svg>
<div style="left:1px;top:958px;width:1197px;height:25px;background:#e6e6e6;"></div>
<div style="left:1px;top:958px;width:1175px;height:1px;background:#cdcdcd;"></div>
<svg style="left:19px;top:965px;" width="6" height="11" viewBox="0 0 6 11"><path d="M5.4 0.6V10.4L0.6 5.5Z" fill="#c3c3c3"/></svg>
<svg style="left:43.5px;top:965px;" width="6" height="11" viewBox="0 0 6 11"><path d="M0.6 0.6V10.4L5.4 5.5Z" fill="#c3c3c3"/></svg>
<div style="left:83px;top:958px;width:116px;height:23px;background:#fff;"></div>
<div style="left:83px;top:980px;width:116px;height:2px;background:#217346;"></div>
<div style="left:198.6px;top:959px;width:1px;height:22px;background:#c9c9c9;"></div>
<span class="t" style="left:92.5px;top:962.61px;font-size:15.5px;line-height:15.5px;color:#217346;transform:scaleX(0.859)">簡易カレンダー</span>
<svg style="left:225px;top:960px;" width="23" height="23" viewBox="0 0 23 23"><circle cx="11.3" cy="11.3" r="10" fill="none" stroke="#858585" stroke-width="1.4"/><path d="M5.8 11.3H16.8M11.3 5.8V16.8" stroke="#7a7a7a" stroke-width="2.2"/></svg>
<div style="left:716px;top:965.4px;width:2px;height:2px;background:#b5b5b5;"></div>
<div style="left:716px;top:969.8px;width:2px;height:2px;background:#b5b5b5;"></div>
<div style="left:716px;top:974.1999999999999px;width:2px;height:2px;background:#b5b5b5;"></div>
<div style="left:731px;top:960px;width:445px;height:22px;background:#d9d9d9;"></div>
<div style="left:731px;top:960px;width:22px;height:22px;background:#fff;box-sizing:border-box;border:1px solid #e3e3e3"></div>
<svg style="left:738px;top:965px;" width="7" height="12" viewBox="0 0 7 12"><path d="M6.4 0.4V11.2L0.6 5.8Z" fill="#777"/></svg>
<div style="left:753px;top:960px;width:300px;height:22px;background:#fff;box-sizing:border-box;border:1px solid #e3e3e3"></div>
<div style="left:1155px;top:960px;width:21px;height:22px;background:#fff;box-sizing:border-box;border:1px solid #e3e3e3"></div>
<svg style="left:1163px;top:965px;" width="7" height="12" viewBox="0 0 7 12"><path d="M0.6 0.4V11.2L6.4 5.8Z" fill="#777"/></svg>
<div style="left:1px;top:983px;width:1197px;height:40px;background:#f3f3f3;"></div>
<span class="t" style="left:8px;top:997.25px;font-size:15px;line-height:15px;color:#3b3b3b;transform:scaleX(1.017)">準備完了</span>
<span class="t" style="left:404px;top:997.01px;font-size:15.5px;line-height:15.5px;color:#3b3b3b;transform:scaleX(1.139)">平均: 2019/6/9(日)</span>
<span class="t" style="left:563px;top:997.01px;font-size:15.5px;line-height:15.5px;color:#3b3b3b;transform:scaleX(0.892)">データの個数: 4</span>
<span class="t" style="left:678.5px;top:997.01px;font-size:15.5px;line-height:15.5px;color:#3b3b3b;transform:scaleX(1.123)">合計: 2019/6/9(日)</span>
<div style="left:841.5px;top:983.5px;width:38.5px;height:39px;background:#c8c8c8;"></div>
<svg style="left:852px;top:995px;" width="18" height="17" viewBox="0 0 18 17"><rect x="0.7" y="0.7" width="16.2" height="15.4" fill="none" stroke="#8a8a8a" stroke-width="1.2"/><path d="M6.2 0.7V16M11.6 0.7V16M0.7 5.8H17M0.7 11H17" stroke="#8a8a8a" stroke-width="1.1" fill="none"/></svg>
<svg style="left:891px;top:995px;" width="18" height="17" viewBox="0 0 18 17"><rect x="0.7" y="0.7" width="16.2" height="15.4" fill="none" stroke="#8a8a8a" stroke-width="1.1"/><rect x="4.6" y="3.6" width="8.4" height="9.8" fill="none" stroke="#8a8a8a" stroke-width="1"/><path d="M6.4 6H11.2M6.4 8.2H11.2M6.4 10.4H11.2" stroke="#999" stroke-width=".9"/></svg>
<svg style="left:929.5px;top:995px;" width="18" height="17" viewBox="0 0 18 17"><rect x="0.7" y="0.7" width="16.2" height="15.4" fill="none" stroke="#8a8a8a" stroke-width="1.1"/><path d="M6.4 0.7V9.4H12V0.7M6.4 9.4H0.7" fill="none" stroke="#8a8a8a" stroke-width="1.1"/></svg>
<div style="left:965px;top:1002.6px;width:8px;height:2px;background:#555;"></div>
<div style="left:978.5px;top:1002.9px;width:127.5px;height:1.4px;background:#a3a3a3;"></div>
<div style="left:1039px;top:996.5px;width:6px;height:14px;background:#6a6a6a;"></div>
<div style="left:1111.5px;top:1002.6px;width:9px;height:2px;background:#555;"></div>
<div style="left:1115px;top:999px;width:2px;height:9px;background:#555;"></div>
<span class="t" style="left:1133.5px;top:996.78px;font-size:16px;line-height:16px;color:#3b3b3b;transform:scaleX(1.051)">100%</span>
<div style="left:0px;top:83px;width:1200px;height:1.6px;background:#eaf6ef;"></div>
<div style="left:234px;top:83px;width:966px;height:1.6px;background:#e2f1e8;"></div>
<div style="left:158px;top:83px;width:76px;height:2px;background:#f3f3f3;"></div>
<div style="left:1px;top:84px;width:1.2px;height:940px;background:#f1f9f4;"></div>
<div style="left:0px;top:83px;width:1px;height:942px;background:#8ba898;"></div>
<div style="left:1197.6px;top:84px;width:1.6px;height:940px;background:#f5fbf7;"></div>
<div style="left:1199px;top:83px;width:1px;height:942px;background:#8ba898;"></div>
<div style="left:0px;top:1022.8px;width:1200px;height:1.2px;background:#f1f9f4;"></div>
<div style="left:0px;top:1023.8px;width:1200px;height:1.2px;background:#86a493;"></div>
</div>
</body></html>
